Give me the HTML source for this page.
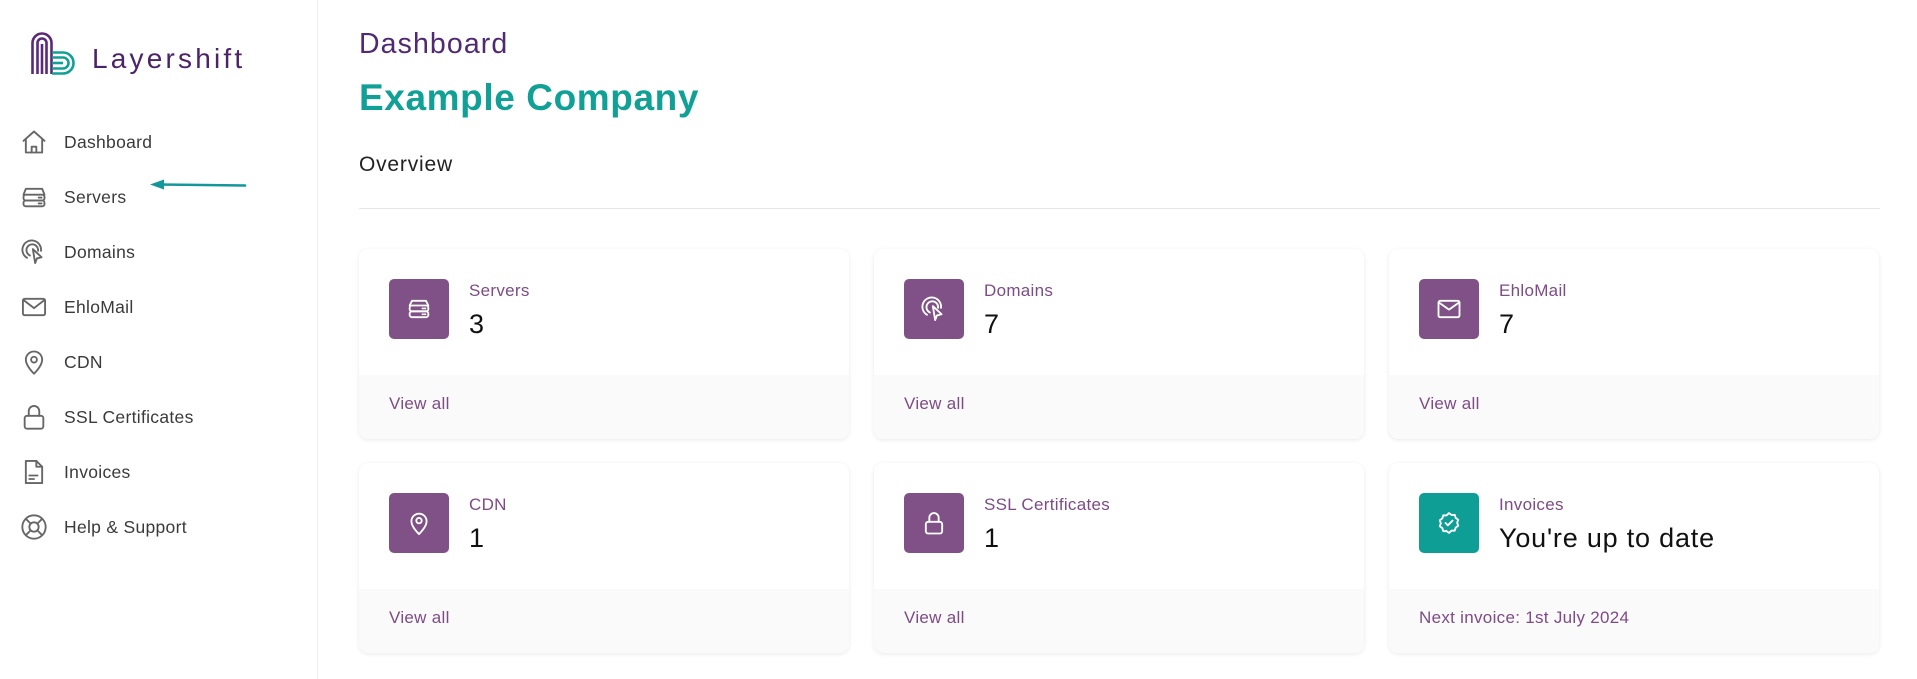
<!DOCTYPE html>
<html><head><meta charset="utf-8">
<style>
*{margin:0;padding:0;box-sizing:border-box}
body{width:1917px;height:679px;background:#fff;font-family:"Liberation Sans",sans-serif;position:relative;overflow:hidden}
.side{position:absolute;left:0;top:0;width:318px;height:679px;border-right:1px solid #ececec}
.logo{position:absolute;left:30px;top:32px}
.logotext{position:absolute;left:92px;top:43px;font-size:28px;color:#4b2467;letter-spacing:3.2px}
.item{position:absolute;left:20px;height:30px;display:flex;align-items:center;color:#3a3a3a;font-size:17.5px;letter-spacing:.3px}
.item svg{width:28px;height:28px;margin-right:16px;stroke:#666;fill:none;stroke-width:1.6;stroke-linecap:round;stroke-linejoin:round}
.h1{position:absolute;left:359px;top:28px;font-size:28.5px;color:#4f2a72;letter-spacing:1.1px}
.h2{position:absolute;left:359px;top:77px;font-size:37px;font-weight:bold;color:#10a096;letter-spacing:.6px}
.h3{position:absolute;left:359px;top:153px;font-size:21px;color:#222;letter-spacing:.8px}
.hr{position:absolute;left:359px;top:208px;width:1521px;height:1px;background:#e6e6e6}
.card{position:absolute;width:490px;height:190px;border-radius:9px;background:#fff;box-shadow:0 1px 4px rgba(0,0,0,.09);overflow:hidden}
.card .foot{position:absolute;left:0;bottom:0;width:100%;height:64px;background:#fafafb;font-size:17px;color:#7d4b86;padding:19px 0 0 30px;letter-spacing:.3px}
.ib{position:absolute;left:30px;top:30px;width:60px;height:60px;border-radius:5px;background:#7f5186;display:flex;align-items:center;justify-content:center}
.ib.t{background:#0f9e95}
.ib svg{width:28px;height:28px;stroke:#fff;fill:none;stroke-width:1.6;stroke-linecap:round;stroke-linejoin:round}
.lab{position:absolute;left:110px;top:32px;font-size:17px;color:#7d4b86;letter-spacing:.3px}
.num{position:absolute;left:110px;top:60px;font-size:27px;color:#111;letter-spacing:.5px}
</style></head><body>
<div class="side">
<svg class="logo" width="48" height="44" viewBox="0 0 48 44">
<g fill="none" stroke="#5a2a78" stroke-width="2.6">
<path d="M2.5 42V11a9.5 9.5 0 0 1 19 0v31"/>
<path d="M7.5 42V11a4.5 4.5 0 0 1 9 0v31"/>
<path d="M12 42V12"/>
</g>
<g fill="none" stroke="#10a096" stroke-width="2.6">
<path d="M22 20.5h11a10.5 10.5 0 0 1 0 21H22"/>
<path d="M22 25.5h11a5.5 5.5 0 0 1 0 11H22"/>
<path d="M22 31h11"/>
</g>
</svg>
<div class="logotext">Layershift</div>
<div class="item" style="top:127px"><svg viewBox="0 0 24 24"><path d="M3 11L12 3l9 8"/><path d="M5 9.5V21h14V9.5"/><path d="M10 21v-5h4v5"/></svg>Dashboard</div>
<div class="item" style="top:182px"><svg viewBox="0 0 24 24"><path d="M3 10l2-5h14l2 5"/><rect x="3" y="10" width="18" height="5" rx="2"/><rect x="3" y="15" width="18" height="5" rx="2"/><path d="M16 12.5h1M18 12.5h.5M16 17.5h1M18 17.5h.5"/></svg>Servers</div>
<div class="item" style="top:237px"><svg viewBox="0 0 24 24"><path d="M6 17a8 8 0 1 1 12-6"/><path d="M8.5 15a5 5 0 1 1 7-4"/><path d="M11 9.5l2 12 1.5-4 4-1z"/></svg>Domains</div>
<div class="item" style="top:292px"><svg viewBox="0 0 24 24"><rect x="2.5" y="5" width="19" height="14" rx="1.5"/><path d="M3 6l9 7 9-7"/></svg>EhloMail</div>
<div class="item" style="top:347px"><svg viewBox="0 0 24 24"><path d="M12 22s7-6.5 7-12a7 7 0 0 0-14 0c0 5.5 7 12 7 12z"/><circle cx="12" cy="10" r="2.5"/></svg>CDN</div>
<div class="item" style="top:402px"><svg viewBox="0 0 24 24"><rect x="4" y="11" width="16" height="11" rx="2"/><path d="M7.5 11V7a4.5 4.5 0 0 1 9 0v4"/></svg>SSL Certificates</div>
<div class="item" style="top:457px"><svg viewBox="0 0 24 24"><path d="M5 2.5h9l5 5V21.5H5z"/><path d="M14 2.5v5h5"/><path d="M8 15h7M8 18h4"/></svg>Invoices</div>
<div class="item" style="top:512px"><svg viewBox="0 0 24 24"><circle cx="12" cy="12" r="10"/><circle cx="12" cy="12" r="4"/><path d="M9 9L5 5M15 9l4-4M9 15l-4 4M15 15l4 4"/></svg>Help &amp; Support</div>
<svg style="position:absolute;left:148px;top:178px" width="100" height="14" viewBox="0 0 100 14"><path d="M12 6.5L97 7.5" stroke="#13979a" stroke-width="2.6" stroke-linecap="round"/><path d="M2 6.5L16 1.5V11.5z" fill="#13979a"/></svg>
</div>

<div class="h1">Dashboard</div>
<div class="h2">Example Company</div>
<div class="h3">Overview</div>
<div class="hr"></div>

<div class="card" style="left:359px;top:249px"><div class="ib"><svg viewBox="0 0 24 24"><path d="M4 9l2-4h12l2 4"/><rect x="4" y="9" width="16" height="5" rx="2"/><rect x="4" y="14" width="16" height="5" rx="2"/><path d="M15 11.5h.5M17 11.5h.5M15 16.5h.5M17 16.5h.5"/></svg></div><div class="lab">Servers</div><div class="num">3</div><div class="foot">View all</div></div>
<div class="card" style="left:874px;top:249px"><div class="ib"><svg viewBox="0 0 24 24"><path d="M6 17a8 8 0 1 1 12-6"/><path d="M8.5 15a5 5 0 1 1 7-4"/><path d="M11 9.5l2 12 1.5-4 4-1z"/></svg></div><div class="lab">Domains</div><div class="num">7</div><div class="foot">View all</div></div>
<div class="card" style="left:1389px;top:249px"><div class="ib"><svg viewBox="0 0 24 24"><rect x="3" y="5" width="18" height="14" rx="1.5"/><path d="M3.5 6.5l8.5 6 8.5-6"/></svg></div><div class="lab">EhloMail</div><div class="num">7</div><div class="foot">View all</div></div>

<div class="card" style="left:359px;top:463px"><div class="ib"><svg viewBox="0 0 24 24"><path d="M12 21.5s6.5-6 6.5-11a6.5 6.5 0 0 0-13 0c0 5 6.5 11 6.5 11z"/><circle cx="12" cy="10" r="2.3"/></svg></div><div class="lab">CDN</div><div class="num">1</div><div class="foot">View all</div></div>
<div class="card" style="left:874px;top:463px"><div class="ib"><svg viewBox="0 0 24 24"><rect x="5" y="11" width="14" height="10" rx="2"/><path d="M8 11V7.5a4 4 0 0 1 8 0V11"/></svg></div><div class="lab">SSL Certificates</div><div class="num">1</div><div class="foot">View all</div></div>
<div class="card" style="left:1389px;top:463px"><div class="ib t"><svg viewBox="0 0 24 24"><path d="M12 3.5l2.2 1.6 2.7-.1.8 2.6 2.2 1.6-.9 2.6.9 2.6-2.2 1.6-.8 2.6-2.7-.1L12 20.5l-2.2-1.6-2.7.1-.8-2.6-2.2-1.6.9-2.6-.9-2.6 2.2-1.6.8-2.6 2.7.1z"/><path d="M9 12l2 2 4-4"/></svg></div><div class="lab">Invoices</div><div class="num" style="letter-spacing:.8px">You're up to date</div><div class="foot">Next invoice: 1st July 2024</div></div>
</body></html>
